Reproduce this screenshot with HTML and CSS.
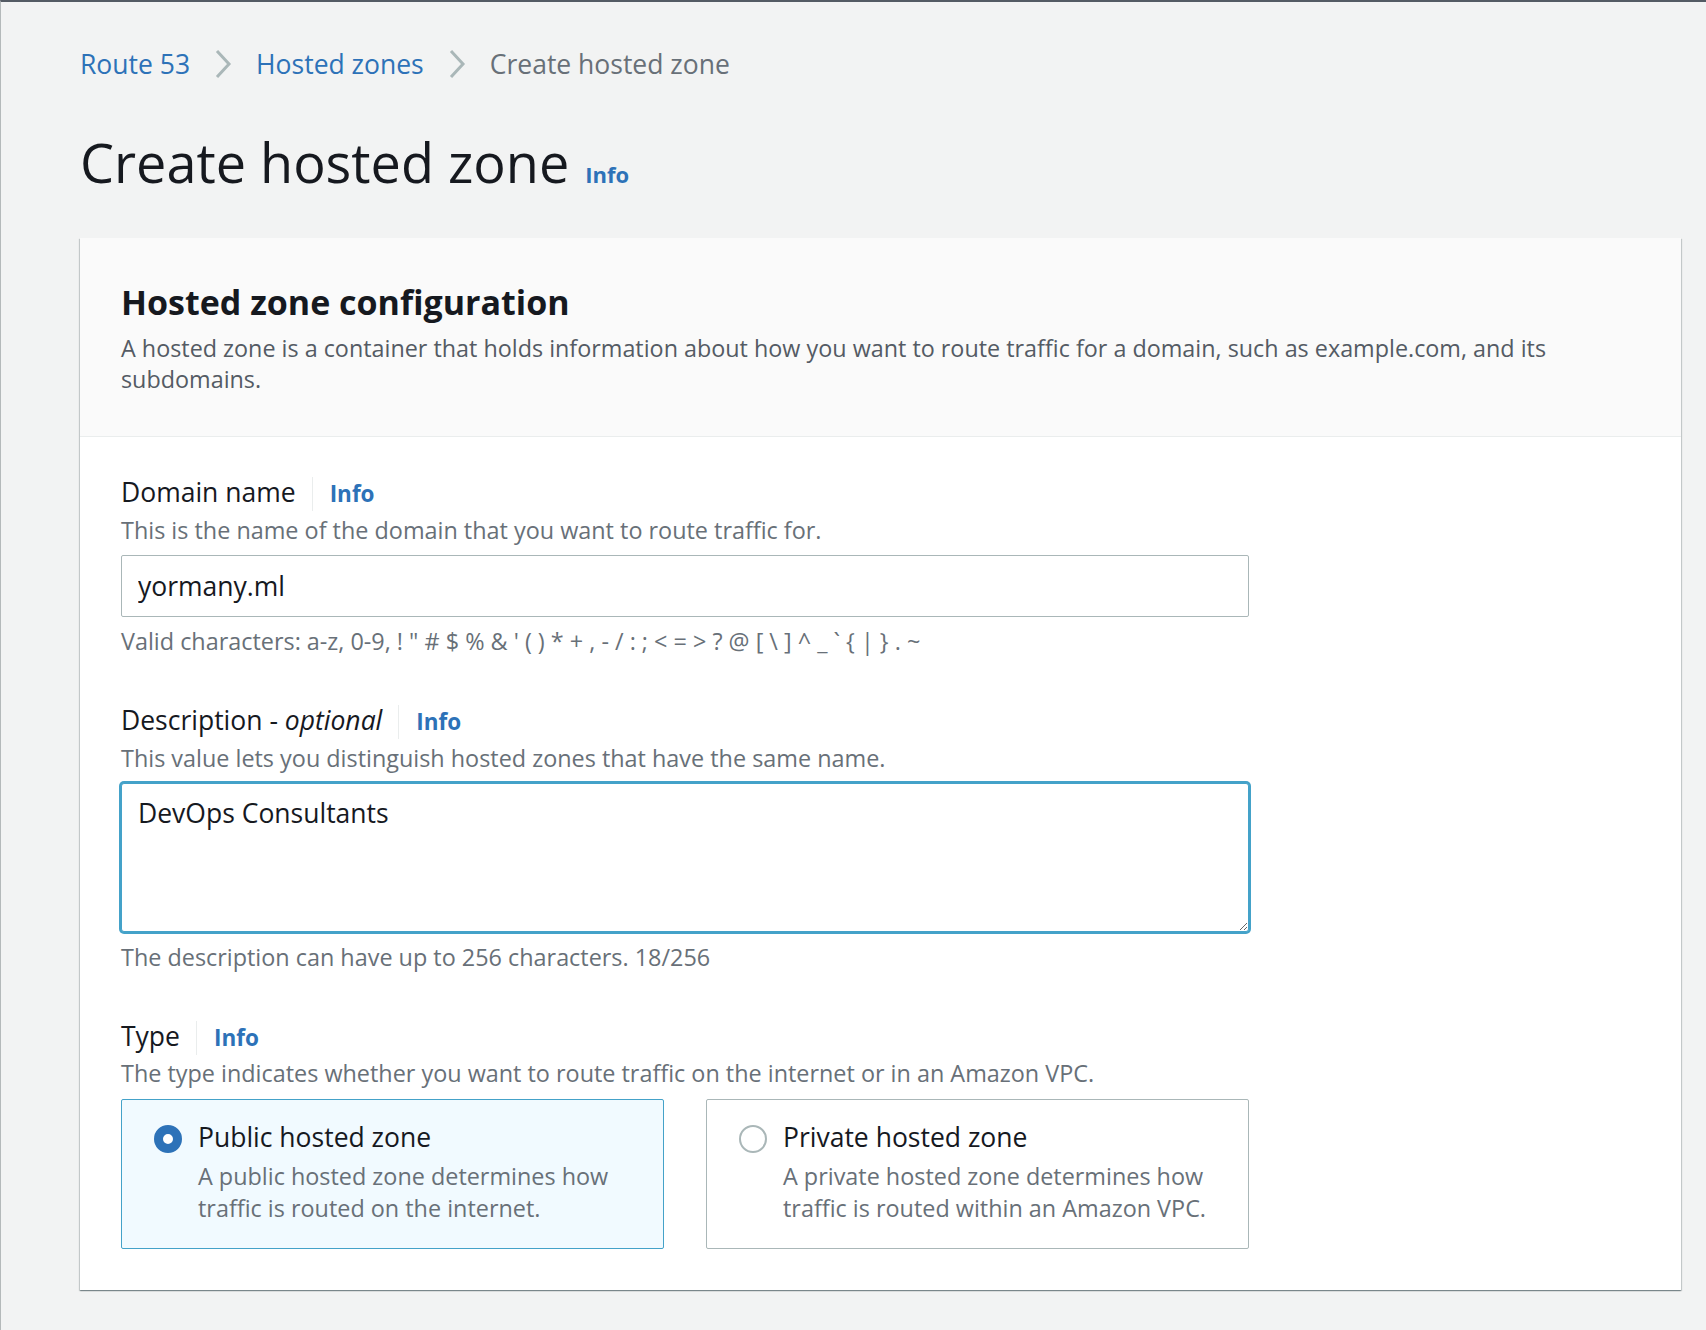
FILE: index.html
```html
<!DOCTYPE html>
<html lang="en">
<head>
<meta charset="utf-8">
<title>Create hosted zone</title>
<link rel="stylesheet" href="styles.css">
</head>
<body>
<nav class="breadcrumbs">
  <a class="crumb crumb-link">Route 53</a>
  <svg class="chev" viewBox="0 0 18 30" aria-hidden="true"><polyline points="3,2 15,15 3,28"/></svg>
  <a class="crumb crumb-link">Hosted zones</a>
  <svg class="chev" viewBox="0 0 18 30" aria-hidden="true"><polyline points="3,2 15,15 3,28"/></svg>
  <span class="crumb crumb-current">Create hosted zone</span>
</nav>

<h1 class="page-title">Create hosted zone<a class="info-h1">Info</a></h1>

<section class="panel">
  <header class="panel-header">
    <h2 class="panel-title">Hosted zone configuration</h2>
    <p class="panel-desc">A hosted zone is a container that holds information about how you want to route traffic for a domain, such as example.com, and its subdomains.</p>
  </header>
  <div class="panel-body">
    <div class="field">
      <div class="label-row"><span class="label">Domain name</span><a class="info">Info</a></div>
      <div class="hint">This is the name of the domain that you want to route traffic for.</div>
      <input class="text-input" type="text" value="yormany.ml">
      <div class="constraint">Valid characters: a-z, 0-9, ! &quot; # $ % &amp; ' ( ) * + , - / : ; &lt; = &gt; ? @ [ \ ] ^ _ ` { | } . ~</div>
    </div>

    <div class="field field-desc">
      <div class="label-row"><span class="label">Description - <i>optional</i></span><a class="info">Info</a></div>
      <div class="hint">This value lets you distinguish hosted zones that have the same name.</div>
      <textarea class="text-area">DevOps Consultants</textarea>
      <div class="constraint counter">The description can have up to 256 characters. 18/256</div>
    </div>

    <div class="field field-type">
      <div class="label-row"><span class="label">Type</span><a class="info">Info</a></div>
      <div class="hint hint-tight">The type indicates whether you want to route traffic on the internet or in an Amazon VPC.</div>
      <div class="tiles">
        <div class="tile tile-selected">
          <span class="radio radio-checked"></span>
          <div class="tile-text">
            <div class="tile-title">Public hosted zone</div>
            <div class="tile-desc">A public hosted zone determines how traffic is routed on the internet.</div>
          </div>
        </div>
        <div class="tile">
          <span class="radio"></span>
          <div class="tile-text">
            <div class="tile-title">Private hosted zone</div>
            <div class="tile-desc">A private hosted zone determines how traffic is routed within an Amazon VPC.</div>
          </div>
        </div>
      </div>
    </div>
  </div>
</section>
</body>
</html>
```

FILE: styles.css
```css
html {
  background: #f2f3f3;
}

body {
  margin: 0;
  min-height: 1330px;
  box-sizing: border-box;
  background: #f2f3f3;
  border-top: 2px solid #545b64;
  border-left: 1px solid #b4b9ba;
  padding: 42px 25px 0 79px;
  font-family: "Open Sans", "Noto Sans", sans-serif;
  color: #16191f;
}

/* Breadcrumbs */
.breadcrumbs {
  display: flex;
  align-items: center;
  height: 40px;
  font-size: 26.5px;
  line-height: 40px;
}

.crumb-link {
  color: #2d72b8;
  text-decoration: none;
}

.crumb-current {
  color: #687078;
}

.chev {
  width: 18px;
  height: 30px;
  margin: 0 24px;
  fill: none;
  stroke: #aab7b8;
  stroke-width: 3;
}

/* Page title */
.page-title {
  margin: 46px 0 0;
  font-size: 54px;
  line-height: 64px;
  font-weight: 400;
  color: #16191f;
}

.info-h1 {
  margin-left: 16px;
  font-size: 22px;
  line-height: 1;
  font-weight: 700;
  color: #2d72b8;
}

/* Panel */
.panel {
  margin-top: 44px;
  background: #ffffff;
  box-shadow: 0 1px 1px 0 rgba(0, 28, 36, 0.3), 1px 1px 1px 0 rgba(0, 28, 36, 0.15), -1px 1px 1px 0 rgba(0, 28, 36, 0.15);
}

.panel-header {
  background: #fafafa;
  border-bottom: 1px solid #eaeded;
  padding: 42px 41px 41px;
}

.panel-title {
  margin: 0;
  font-size: 34px;
  line-height: 44px;
  font-weight: 700;
  color: #16191f;
}

.panel-desc {
  margin: 9px 0 0;
  font-size: 23.35px;
  line-height: 31px;
  color: #545b64;
}

.panel-body {
  padding: 38px 41px 41px;
}

/* Fields */
.field {
  max-width: 1128px;
}

.field-desc {
  margin-top: 46px;
}

.field-type {
  margin-top: 46px;
}

.label-row {
  display: flex;
  align-items: baseline;
  font-size: 26.5px;
  line-height: 34px;
}

.label {
  margin-right: 16px;
  color: #16191f;
}

.label i {
  font-style: italic;
}

.info {
  display: inline-block;
  border-left: 1px solid #eaeded;
  padding-left: 17px;
  font-size: 22.5px;
  line-height: 34px;
  font-weight: 700;
  color: #2d72b8;
}

.hint {
  margin-top: 4px;
  font-size: 23.4px;
  line-height: 31px;
  color: #687078;
}

.hint-tight {
  margin-top: 3px;
}

.text-input {
  display: block;
  width: 100%;
  height: 62px;
  margin-top: 9px;
  box-sizing: border-box;
  border: 1px solid #aab7b8;
  border-radius: 2px;
  padding: 0 16px;
  font-family: "Open Sans", "Noto Sans", sans-serif;
  font-size: 26.5px;
  color: #16191f;
  background: #ffffff;
  outline: none;
}

.constraint {
  margin-top: 9px;
  font-size: 23.4px;
  line-height: 31px;
  color: #687078;
}

.text-area {
  display: block;
  width: 100%;
  height: 149px;
  margin: 9px 0 0;
  box-sizing: border-box;
  border: 1px solid #44a2c9;
  border-radius: 3px;
  box-shadow: 0 0 0 2px #44a2c9;
  padding: 12px 16px;
  font-family: "Open Sans", "Noto Sans", sans-serif;
  font-size: 26.5px;
  line-height: 34px;
  color: #16191f;
  background: #ffffff;
  outline: none;
  resize: vertical;
}

.counter {
  margin-top: 10px;
}

/* Tiles */
.tiles {
  display: grid;
  grid-template-columns: 1fr 1fr;
  gap: 42px;
  margin-top: 10px;
}

.tile {
  display: flex;
  gap: 16px;
  border: 1px solid #aab7b8;
  border-radius: 2px;
  padding: 20px 16px 24px 32px;
  background: #ffffff;
}

.tile-selected {
  border-color: #44a2c9;
  background: #f1faff;
}

.radio {
  flex: none;
  width: 28px;
  height: 28px;
  margin-top: 5px;
  box-sizing: border-box;
  border: 2px solid #aab7b8;
  border-radius: 50%;
  background: #ffffff;
}

.radio-checked {
  border: 9px solid #2d72b8;
}

.tile-title {
  font-size: 26.5px;
  line-height: 34px;
  color: #16191f;
}

.tile-desc {
  margin-top: 6px;
  font-size: 23.4px;
  line-height: 32px;
  color: #687078;
}
```
